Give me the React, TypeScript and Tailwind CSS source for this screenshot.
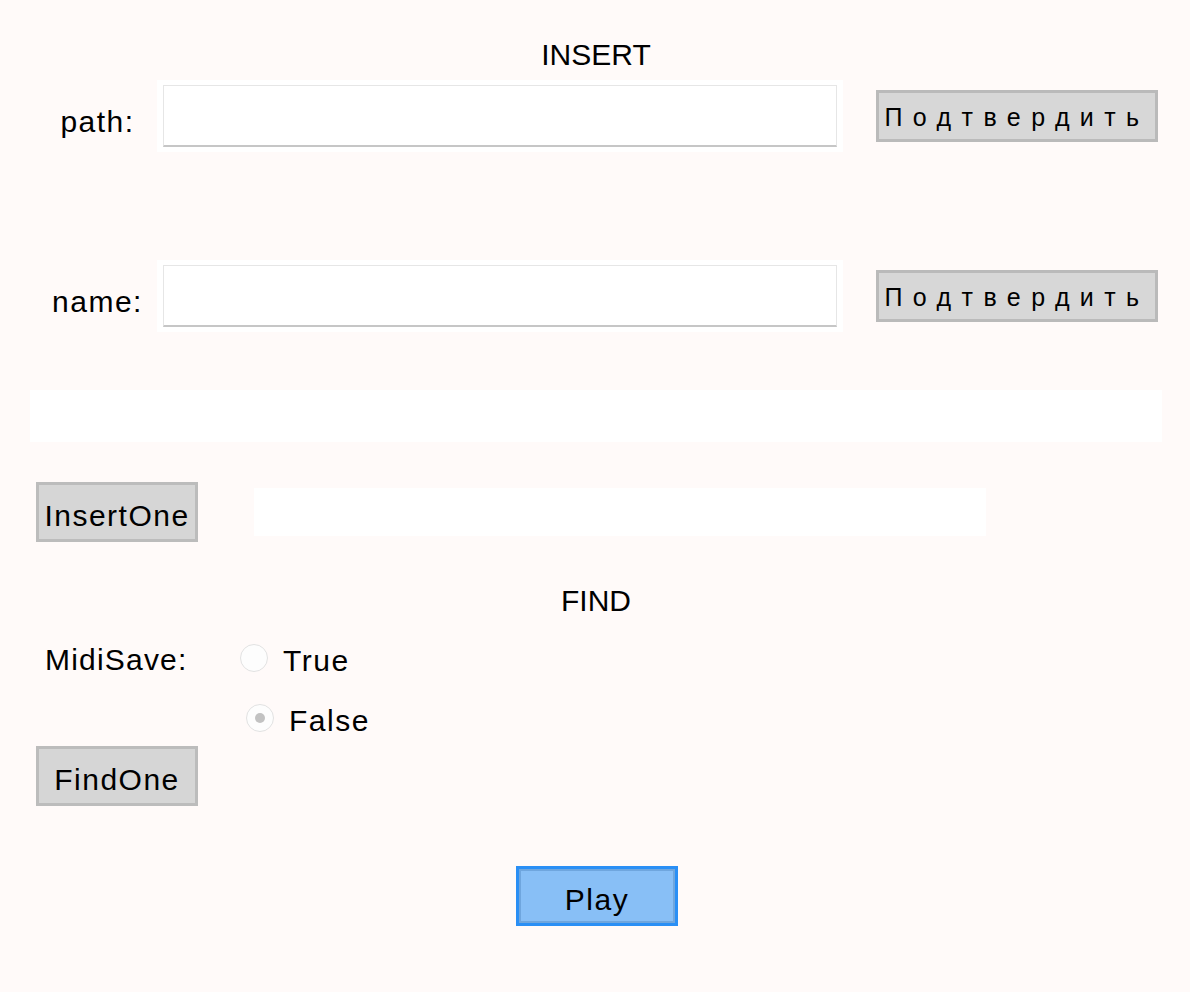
import React from "react";

const font = { fontFamily: '"Liberation Sans", Arial, sans-serif' };

const Field = ({ label }: { label: string }) => (
  <div className="flex h-[72px] items-center">
    <div className="flex w-[157px] shrink-0 justify-center pl-[38px]">
      <span className="mt-[12px] text-[30px] leading-none tracking-[1.5px]">{label}</span>
    </div>
    <div className="h-[72px] w-[686px] bg-white p-[5px] pl-[6px] pr-[6px]">
      <input
        type="text"
        className="h-full w-full border border-[#e6e6e6] border-b-2 border-b-[#c6c6c6] bg-white outline-none"
      />
    </div>
    <button className="ml-[33px] h-[52px] w-[282px] border-[3px] border-[#bababa] bg-[#d7d7d7] pt-[3px] text-[25px] leading-none tracking-[10.4px] text-black">
      Подтвердить
    </button>
  </div>
);

const GrayButton = ({ children }: { children: React.ReactNode }) => (
  <button className="h-[60px] w-[162px] border-[3px] border-[#bcbcbc] bg-[#d6d6d6] pt-[8px] text-[30px] leading-none tracking-[1.5px] text-black">
    {children}
  </button>
);

const Radio = ({ checked }: { checked?: boolean }) => (
  <span className="flex h-[28px] w-[28px] items-center justify-center rounded-full border border-[#e2e2e2] bg-[#fdfdfd]">
    {checked && <span className="h-[10px] w-[10px] rounded-full bg-[#c2c2c2]" />}
  </span>
);

export default function App() {
  return (
    <div className="flex min-h-[992px] w-full flex-col bg-[#fffaf9] pt-[39px] text-black" style={font}>
      <div className="h-[32px] pl-[2px] text-center text-[30px] leading-[32px]">INSERT</div>

      <div className="mt-[9px]">
        <Field label="path:" />
      </div>
      <div className="mt-[108px]">
        <Field label="name:" />
      </div>

      <div className="ml-[30px] mr-[28px] mt-[58px] h-[52px] bg-white" />

      <div className="mt-[40px] flex h-[60px] items-center pl-[36px]">
        <GrayButton>InsertOne</GrayButton>
        <div className="ml-[56px] h-[48px] w-[732px] bg-white" />
      </div>

      <div className="mt-[43px] h-[32px] pl-[2px] text-center text-[30px] leading-[32px]">FIND</div>

      <div className="mt-[27px] flex h-[28px] items-center">
        <span className="ml-[45px] mt-[4px] w-[195px] text-[30px] leading-none tracking-[1.2px]">MidiSave:</span>
        <Radio />
        <span className="ml-[15px] mt-[6px] text-[30px] leading-none tracking-[1.5px]">True</span>
      </div>
      <div className="mt-[32px] flex h-[28px] items-center pl-[246px]">
        <Radio checked />
        <span className="ml-[15px] mt-[6px] text-[30px] leading-none tracking-[1.5px]">False</span>
      </div>

      <div className="mt-[14px] pl-[36px]">
        <GrayButton>FindOne</GrayButton>
      </div>

      <div className="mt-[60px] flex justify-center pl-[4px]">
        <button className="h-[60px] w-[162px] border-[3px] border-[#2a8ff5] bg-[#88bff6] pt-[8px] text-[30px] leading-none tracking-[1.5px] text-black shadow-[inset_0_0_0_2px_#6fa6de]">
          Play
        </button>
      </div>
    </div>
  );
}
